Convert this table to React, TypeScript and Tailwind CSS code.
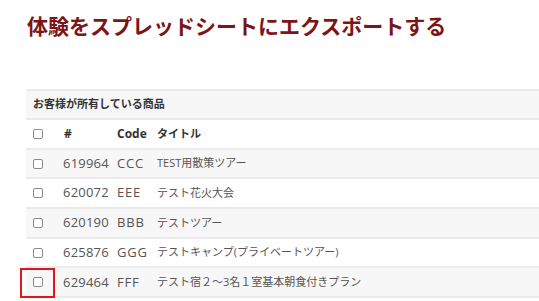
import React from "react";

type Item = { id: string; code: string; title: string };

const items: Item[] = [
  { id: "619964", code: "CCC", title: "TEST用散策ツアー" },
  { id: "620072", code: "EEE", title: "テスト花火大会" },
  { id: "620190", code: "BBB", title: "テストツアー" },
  { id: "625876", code: "GGG", title: "テストキャンプ(プライベートツアー)" },
  { id: "629464", code: "FFF", title: "テスト宿２～3名１室基本朝食付きプラン" },
];

const font = { fontFamily: '"Open Sans", "Noto Sans CJK JP", sans-serif' };

function Box() {
  return <span className="block w-[10px] h-[10px] rounded-[2px] border border-[#8a8a8a] bg-white" />;
}

export default function App() {
  return (
    <div className="w-[539px] h-[301px] overflow-hidden bg-white" style={font}>
      <h1 className="pl-[27px] pt-[12px] text-[21px] leading-[28px] font-bold text-[#7d1517]">
        体験をスプレッドシートにエクスポートする
      </h1>
      <div className="ml-[26px] mt-[49px] w-[540px] text-[11px] text-[#555]">
        <div className="h-[29px] flex items-center pl-[7px] bg-[#f7f7f7] border-t-2 border-[#ebebeb] font-bold text-[#333]">
          お客様が所有している商品
        </div>
        <div className="h-[29.7px] grid grid-cols-[31px_53px_40px_1fr] items-center border-t-2 border-[#ebebeb] bg-white font-bold text-[#333]">
          <div className="pl-[7px]"><Box /></div>
          <div className="pl-[7px] text-[12px]">#</div>
          <div className="pl-[7px] text-[12px]">Code</div>
          <div className="pl-[7px]">タイトル</div>
        </div>
        {items.map((it, i) => (
          <div
            key={it.id}
            className={
              "relative h-[29.7px] grid grid-cols-[31px_53px_40px_1fr] items-center border-t-2 border-[#ebebeb] " +
              (i % 2 === 0 ? "bg-[#f7f7f7]" : "bg-white")
            }
          >
            <div className="pl-[6px] pl-[7px]"><Box /></div>
            <div className="pl-[6px] text-[13px] tracking-[0.2px]">{it.id}</div>
            <div className="pl-[7px] text-[13px] tracking-[0.8px]">{it.code}</div>
            <div className="pl-[7px] whitespace-nowrap">{it.title}</div>
            {i === items.length - 1 && (
              <span className="absolute left-[-6px] top-[0px] w-[35px] h-[30px] border-2 border-[#e5141b]" />
            )}
          </div>
        ))}
        <div className="border-t-2 border-[#ebebeb]" />
      </div>
    </div>
  );
}
